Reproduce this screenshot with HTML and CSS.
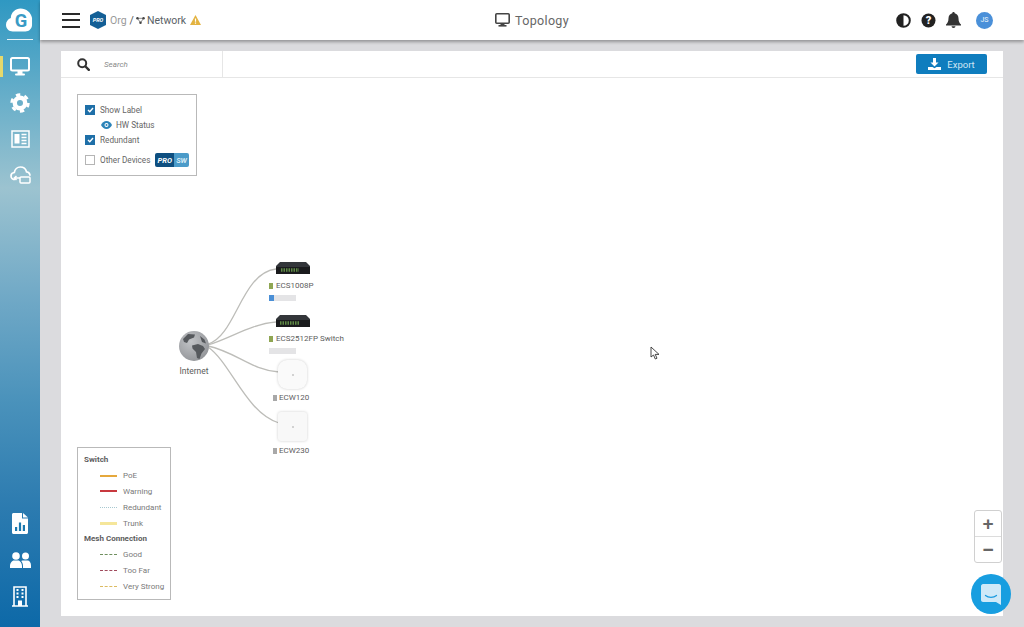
FILE: index.html
```html
<!DOCTYPE html>
<html lang="en">
<head>
<meta charset="utf-8">
<title>Topology</title>
<link rel="stylesheet" href="styles.css">
</head>
<body>
<div class="app">
  <aside class="sidebar">
    <div class="logo">
      <svg width="28" height="26" viewBox="0 0 28 26"><path fill="#fff" d="M7 25C3 25 0 22 0 18c0-3 2-6 5-7C5 5 10 1 15 1c6 0 11 4 12 10v7c0 4-3 7-7 7z"/><text x="15.500" y="20.500" text-anchor="middle" class="logo-g">G</text></svg>
    </div>
    <nav class="nav nav-top">
      <a class="nav-item active"><svg width="20" height="19" viewBox="0 0 20 19"><rect x="1" y="1" width="18" height="12.500" rx="1.500" fill="none" stroke="#fff" stroke-width="2"/><rect x="7.500" y="14" width="5" height="3" fill="#fff"/><rect x="5" y="16.500" width="10" height="2" rx="1" fill="#fff"/></svg></a>
      <a class="nav-item"><svg width="20" height="20" viewBox="0 0 20 20"><circle cx="10" cy="10" r="5.200" fill="none" stroke="#fff" stroke-width="4.400"/><circle cx="10" cy="10" r="8.400" fill="none" stroke="#fff" stroke-width="2.600" stroke-dasharray="4.400 4.400"/></svg></a>
      <a class="nav-item"><svg width="19" height="18" viewBox="0 0 19 18"><rect x="1" y="1" width="17" height="16" fill="none" stroke="#fff" stroke-width="1.500"/><rect x="3.500" y="4" width="5" height="9.500" fill="#fff"/><path d="M10.500 4.500h5M10.500 7.500h5M10.500 10.500h5M10.500 13.500h5" stroke="#fff" stroke-width="1.300"/></svg></a>
      <a class="nav-item"><svg width="21" height="19" viewBox="0 0 21 19"><path fill="none" stroke="#fff" stroke-width="1.700" d="M5 13.500C2.800 13.500 1 12 1 10c0-2 1.500-3.300 3.300-3.500C4.800 3.300 7.300 1 10.300 1c3 0 5.500 2 6.200 4.800 2 .3 3.500 2 3.500 3.900"/><path fill="none" stroke="#fff" stroke-width="1.500" d="M10 12H4.500m2-2l-2.200 2 2.200 2"/><rect x="10" y="11" width="10" height="6" rx="1" fill="none" stroke="#fff" stroke-width="1.500"/></svg></a>
    </nav>
    <nav class="nav nav-bottom">
      <a class="nav-item"><svg width="16" height="21" viewBox="0 0 16 21"><path fill="#fff" d="M0 1.500C0 .7.700 0 1.500 0H10v5.500h6v14c0 .8-.7 1.500-1.500 1.500h-13C.7 21 0 20.300 0 19.500z"/><path fill="#fff" d="M11 0l5 4.500h-5z"/><path fill="#1a78ae" d="M3 14h2.200v4H3zM6.900 9.500h2.200V18H6.900zM10.800 12h2.200v6h-2.200z"/></svg></a>
      <a class="nav-item"><svg width="21" height="16" viewBox="0 0 21 16"><circle cx="6" cy="4" r="3.800" fill="#fff"/><circle cx="15.500" cy="4" r="3.500" fill="#fff"/><path fill="#fff" d="M0 14c0-3 2-5.500 4-5.500h4c2 0 4 2.500 4 5.500v2H0zM13 16v-2c0-2-.7-3.700-1.800-5 .8-.4 1.500-.5 2.300-.5h4c2 0 3.500 2 3.500 5v2.500z"/></svg></a>
      <a class="nav-item"><svg width="16" height="21" viewBox="0 0 16 21"><path fill="none" stroke="#fff" stroke-width="1.600" d="M2 20V1h12v19M0 20h16"/><path stroke="#fff" stroke-width="2" d="M4.500 4h2M9.500 4h2M4.500 7.500h2M9.500 7.500h2M4.500 11h2M9.500 11h2"/><rect x="6" y="14.500" width="4" height="5.500" fill="#fff"/></svg></a>
    </nav>
  </aside>

  <div class="main">
    <header class="topbar">
      <div class="crumbs">
        <button class="burger" aria-label="Menu"><span></span><span></span><span></span></button>
        <svg class="pro-hex" width="16" height="18" viewBox="0 0 16 18"><path fill="#135f96" d="M8 0l8 4v10l-8 4-8-4V4z"/><text x="8" y="11" text-anchor="middle" class="hex-text">PRO</text></svg>
        <span class="crumb-org">Org</span>
        <span class="crumb-sep">/</span>
        <svg class="net-icon" width="9" height="7" viewBox="0 0 10 8"><circle cx="1.500" cy="1.500" r="1.400"/><circle cx="8.500" cy="1.500" r="1.400"/><circle cx="5" cy="6.500" r="1.400"/><path d="M1.500 1.500h7L5 6.500z" fill="none" stroke="#444" stroke-width=".7"/></svg>
        <span class="crumb-net">Network</span>
        <svg class="warn" width="11" height="10" viewBox="0 0 11 10"><path fill="#e3b341" d="M5.500 0L11 10H0z"/><path stroke="#fff" stroke-width="1.200" d="M5.500 3.500v3.200M5.500 7.600v1.200"/></svg>
      </div>
      <div class="title">
        <svg width="15" height="14" viewBox="0 0 15 14"><rect x=".8" y=".8" width="13.400" height="9.400" rx="1" fill="none" stroke="#444" stroke-width="1.600"/><rect x="5.500" y="10" width="4" height="2.500" fill="#444"/><rect x="3.500" y="12" width="8" height="1.600" fill="#444"/></svg>
        <span>Topology</span>
      </div>
      <div class="top-actions">
        <svg width="15" height="15" viewBox="0 0 15 15"><circle cx="7.500" cy="7.500" r="6.300" fill="#fff" stroke="#222" stroke-width="2"/><path fill="#222" d="M7.500 1.500a6 6 0 000 12z"/></svg>
        <svg width="15" height="15" viewBox="0 0 15 15"><circle cx="7.500" cy="7.500" r="7" fill="#222"/><text x="7.500" y="11.300" text-anchor="middle" class="q-text">?</text></svg>
        <svg width="15" height="16" viewBox="0 0 15 16"><path fill="#333" d="M7.500 0c.7 0 1.200.5 1.200 1.200C11 1.800 12.500 3.800 12.500 6.200c0 3.300 1 4.800 2.500 6.300v1H0v-1c1.500-1.500 2.500-3 2.500-6.300 0-2.400 1.500-4.400 3.800-5C6.300.5 6.800 0 7.500 0zM5.500 14.300h4a2 1.700 0 01-4 0z"/></svg>
        <span class="avatar">JS</span>
      </div>
    </header>

    <main class="content">
      <section class="card">
        <div class="toolbar">
          <div class="search">
            <svg width="13" height="13" viewBox="0 0 13 13"><circle cx="5.200" cy="5.200" r="4" fill="none" stroke="#333" stroke-width="2"/><path stroke="#333" stroke-width="2.400" stroke-linecap="round" d="M8.500 8.500l3.300 3.300"/></svg>
            <span class="search-text">Search</span>
          </div>
          <button class="export">
            <svg width="13" height="12" viewBox="0 0 13 12"><path fill="#fff" d="M5 0h3v4.500h2.500L6.500 8.500l-4-4H5zM0 9h4.500l2 1.300L8.500 9H13v3H0z"/></svg>
            <span>Export</span>
          </button>
        </div>

        <div class="canvas">
          <svg class="links" width="942" height="538" viewBox="0 0 942 538">
            <g fill="none" stroke="#bdbdb9" stroke-width="1.300">
              <path d="M147 266C175 258 180 195 215 191"/>
              <path d="M147 267C170 260 190 246 215 244"/>
              <path d="M147 268C175 274 190 292 218 294"/>
              <path d="M147 269C170 285 185 335 218 345"/>
            </g>
          </svg>

          <div class="panel options">
            <label class="opt"><span class="box on"><svg width="7" height="6" viewBox="0 0 7 6"><path d="M1 3l1.800 1.800L6 1" fill="none" stroke="#fff" stroke-width="1.400"/></svg></span>Show Label</label>
            <div class="opt opt-sub"><svg width="11" height="8" viewBox="0 0 11 8"><path fill="#2b83b8" d="M5.500 0C8 0 10 2 11 4 10 6 8 8 5.500 8S1 6 0 4C1 2 3 0 5.500 0z"/><circle cx="5.500" cy="4" r="2" fill="#fff"/><circle cx="5.500" cy="4" r="1" fill="#2b83b8"/></svg>HW Status</div>
            <label class="opt"><span class="box on"><svg width="7" height="6" viewBox="0 0 7 6"><path d="M1 3l1.800 1.800L6 1" fill="none" stroke="#fff" stroke-width="1.400"/></svg></span>Redundant</label>
            <label class="opt opt-last"><span class="box"></span>Other Devices<span class="badge"><b class="badge-pro">PRO</b><b class="badge-sw">SW</b></span></label>
          </div>

          <div class="node globe-node">
            <svg width="30" height="30" viewBox="0 0 30 30">
              <defs><radialGradient id="globe-shade" cx=".4" cy=".35" r=".75"><stop offset="0" stop-color="#c2c4c7"/><stop offset="1" stop-color="#8f9195"/></radialGradient></defs>
              <circle cx="15" cy="15" r="15" fill="url(#globe-shade)"/>
              <path fill="#56595d" d="M9 3l7 .5-1 3-5 2-2 3.500-3-1-1-3zM13 14.500l6-1.500 5 2 2 3-3.500 4.500-2 5.500-2.500-1-1-6-3.500-3.500zM21 5l4.500 3.500 1.500 4-4-1.500z"/>
            </svg>
            <span class="node-name">Internet</span>
          </div>

          <div class="node dev sw sw-a">
            <svg class="switch-ic" width="34" height="12" viewBox="0 0 34 12"><path fill="#33363a" d="M4 0h26l4 4v8H0V4z"/><path fill="#1a1b1d" d="M0 5h34v7H0z"/><path stroke="#5f8a45" stroke-width="3.500" stroke-dasharray="1.500 1" d="M5 8h18"/></svg>
            <span class="dev-label"><i class="dot green"></i>ECS1008P</span>
            <span class="usage"><i class="usage-fill"></i></span>
          </div>
          <div class="node dev sw sw-b">
            <svg class="switch-ic" width="34" height="12" viewBox="0 0 34 12"><path fill="#33363a" d="M4 0h26l4 4v8H0V4z"/><path fill="#1a1b1d" d="M0 5h34v7H0z"/><path stroke="#5f8a45" stroke-width="3.500" stroke-dasharray="1.500 1" d="M4 8h20"/></svg>
            <span class="dev-label"><i class="dot green"></i>ECS2512FP Switch</span>
            <span class="usage"></span>
          </div>
          <div class="node dev ap ap-a">
            <span class="ap-ic round"><i></i></span>
            <span class="dev-label"><i class="dot grey"></i>ECW120</span>
          </div>
          <div class="node dev ap ap-b">
            <span class="ap-ic"><i></i></span>
            <span class="dev-label"><i class="dot grey"></i>ECW230</span>
          </div>

          <div class="panel legend">
            <div class="leg-head">Switch</div>
            <div class="leg-row"><i class="line poe"></i>PoE</div>
            <div class="leg-row"><i class="line warning"></i>Warning</div>
            <div class="leg-row"><i class="line redundant"></i>Redundant</div>
            <div class="leg-row"><i class="line trunk"></i>Trunk</div>
            <div class="leg-head">Mesh Connection</div>
            <div class="leg-row"><i class="line good"></i>Good</div>
            <div class="leg-row"><i class="line far"></i>Too Far</div>
            <div class="leg-row"><i class="line strong"></i>Very Strong</div>
          </div>

          <svg class="cursor" width="10" height="14" viewBox="0 0 10 14"><path fill="#fff" stroke="#333" stroke-width=".9" d="M1 1v10l2.500-2 1.800 4 1.700-.8-1.800-3.800H9z"/></svg>

          <div class="zoom">
            <button class="zoom-btn">+</button>
            <button class="zoom-btn">&#8722;</button>
          </div>
        </div>
      </section>
    </main>
  </div>
</div>
<div class="chat">
  <svg width="20" height="21" viewBox="0 0 20 21"><path fill="#cfe9f8" d="M2 0h16c1 0 2 1 2 2v19l-5-3H2c-1 0-2-1-2-2V2C0 1 1 0 2 0z"/><path d="M4.500 11.500c3 2.500 8 2.500 11 0" fill="none" stroke="#1b9be0" stroke-width="1.300" stroke-linecap="round"/></svg>
</div>
</body>
</html>
```
FILE: styles.css
```css
* { box-sizing: border-box; }
html, body { margin: 0; height: 100%; overflow: hidden; }
body { font-family: Roboto, "Liberation Sans", sans-serif; color: #666; background: #dbdbde; }

.app { display: flex; height: 627px; }

.sidebar {
  width: 40px; flex: none; display: flex; flex-direction: column;
  background: linear-gradient(180deg, #2f98c2 0%, #9cc3d0 30%, #6fa8c6 48%, #4a92bb 64%, #2c7bb0 81%, #0d69a8 100%);
}
.logo { height: 40px; margin: 0 7px; padding-top: 7px; border-bottom: 1px solid #e8f3f8; display: flex; justify-content: center; }
.logo svg { margin-left: -1px; }
.logo-g { font: 700 19px Roboto, sans-serif; fill: #3a9bc5; }
.nav { display: flex; flex-direction: column; }
.nav-top { margin-top: 8px; }
.nav-bottom { margin-top: auto; margin-bottom: 12px; }
.nav-item { height: 36.500px; display: flex; align-items: center; justify-content: center; position: relative; }
.nav-item.active::before { content: ""; position: absolute; left: 0; top: 8px; width: 3px; height: 21px; background: #e6d96c; }

.main { flex: 1; min-width: 0; display: flex; flex-direction: column; }

.topbar {
  height: 40px; flex: none; background: #fff; display: grid; grid-template-columns: 1fr auto 1fr;
  align-items: center; padding: 0 22px; box-shadow: 0 2px 3px rgba(0,0,0,.32); position: relative; z-index: 2;
}
.crumbs { display: flex; align-items: center; font-size: 10.500px; }
.burger { width: 18px; height: 15px; padding: 0; border: 0; background: none; display: flex; flex-direction: column; justify-content: space-between; margin-right: 10px; }
.burger span { display: block; height: 2px; background: #2a2a2a; }
.pro-hex { margin-right: 4px; }
.hex-text { font: italic 700 5.500px Roboto, sans-serif; fill: #fff; }
.crumb-org { color: #999; }
.crumb-sep { color: #555; margin: 0 2px 0 3px; }
.net-icon { fill: #444; margin-right: 2px; }
.crumb-net { color: #5a5f66; margin-right: 4px; }
.title { display: flex; align-items: center; gap: 5px; font-size: 12.500px; color: #666; letter-spacing: .35px; }
.top-actions { display: flex; align-items: center; justify-content: flex-end; gap: 10px; padding-right: 9px; }
.q-text { font: 900 11px Roboto, sans-serif; fill: #fff; }
.avatar { width: 17px; height: 17px; margin-left: 5px; border-radius: 50%; background: #4a90d9; color: #dce9f7; font-size: 7px; font-weight: 500; display: flex; align-items: center; justify-content: center; }

.content { flex: 1; padding: 11px 21px; min-height: 0; display: flex; }
.card { flex: 1; background: #fff; display: flex; flex-direction: column; }

.toolbar { height: 27px; flex: none; display: flex; align-items: center; justify-content: space-between; border-bottom: 1px solid #e6e6e6; padding-right: 16px; }
.search { width: 162px; height: 26px; display: flex; align-items: center; padding-left: 16px; gap: 14px; border-right: 1px solid #e6e6e6; }
.search-text { font-size: 8px; font-style: italic; color: #8a8a8a; }
.export { width: 71px; height: 20px; border: 0; border-radius: 2px; background: #0f7dbe; color: #cfe6f4; font: 9.500px Roboto, sans-serif; display: flex; align-items: center; justify-content: center; gap: 6px; }

.canvas { flex: 1; position: relative; }
.links { position: absolute; left: 0; top: 0; }

.panel { position: absolute; background: #fff; border: 1px solid #b9b9b9; font-size: 8.200px; color: #666; white-space: nowrap; }
.options { left: 16px; top: 16px; width: 120px; height: 82px; padding: 7px 7px 0; }
.opt { height: 15px; display: flex; align-items: center; gap: 5px; }
.opt-sub { padding-left: 16px; gap: 4px; }
.opt-last { height: 18px; margin-top: 4px; }
.box { width: 10px; height: 10px; flex: none; border: 1px solid #b5b5b5; display: flex; align-items: center; justify-content: center; }
.box.on { background: #1e6fa8; border-color: #1e6fa8; }
.badge { display: flex; height: 14px; margin-left: 0; font-size: 7.500px; font-style: italic; color: #fff; border-radius: 2px; overflow: hidden; }
.badge b { display: flex; align-items: center; justify-content: center; }
.badge-pro { width: 20px; background: #0e4f80; }
.badge-sw { width: 16px; background: #4b9bc9; color: #d5ebf6; }

.legend { left: 16px; bottom: 16px; width: 94px; height: 153px; padding: 4px 6px 0; font-size: 8px; }
.leg-head { height: 15.800px; display: flex; align-items: center; font-weight: 700; color: #5d5d5d; }
.leg-row { height: 15.800px; display: flex; align-items: center; padding-left: 16px; color: #7a7a7a; }
.line { width: 17px; margin-right: 6px; border-top: 2px solid; flex: none; }
.poe { border-color: #e5a83c; }
.warning { border-color: #c8393f; }
.redundant { border-top: 1px dotted #a8c8d0; }
.trunk { border-top: 3px solid #f5e69a; }
.good { border-top: 1px dashed #6f8f5f; }
.far { border-top: 1px dashed #a04a5c; }
.strong { border-top: 1px dashed #dcbb62; }

.node { position: absolute; font-size: 8px; color: #5d5d5d; }
.globe-node { left: 118px; top: 253px; width: 30px; height: 46px; display: flex; flex-direction: column; align-items: center; gap: 5px; }
.node-name { white-space: nowrap; line-height: 11px; font-size: 8.500px; }
.dev { display: flex; flex-direction: column; }
.switch-ic { margin-left: 7px; }
.sw-a { left: 208px; top: 184px; }
.sw-b { left: 208px; top: 237px; }
.ap-a { left: 212px; top: 282px; }
.ap-b { left: 212px; top: 334px; }
.dev-label { display: flex; align-items: center; gap: 3px; white-space: nowrap; line-height: 11px; margin-top: 6px; }
.ap .dev-label { margin-top: 4px; gap: 2px; }
.ap-a .dev-label { margin-top: 3px; }
.dot { width: 4px; height: 6px; flex: none; }
.green { background: #8fa653; }
.grey { background: #a8a8a8; }
.usage { width: 27px; height: 6px; background: #e4e4e6; margin-top: 4px; display: block; }
.usage-fill { display: block; width: 5px; height: 6px; background: #4a8fd6; }
.ap-ic { width: 29px; height: 29px; margin-left: 5px; border-radius: 3px; background: #f8f8f8; box-shadow: 0 0 3px rgba(0,0,0,.2); display: flex; align-items: center; justify-content: center; }
.ap-ic.round { border-radius: 9px; background: #fafafa; }
.ap-ic i { width: 2px; height: 2px; border-radius: 50%; background: #c4c4c4; }

.cursor { position: absolute; left: 589px; top: 268px; }

.zoom { position: absolute; right: 1px; bottom: 53px; width: 28px; height: 53px; border: 1px solid #d0d0d0; border-radius: 3px; background: #fff; display: flex; flex-direction: column; }
.zoom-btn { flex: 1; border: 0; background: none; padding: 0; font: 700 19px/1 "Liberation Sans", sans-serif; color: #666; }
.zoom-btn + .zoom-btn { border-top: 1px solid #dcdcdc; }

.chat { position: fixed; left: 971px; top: 574px; width: 40px; height: 40px; border-radius: 50%; background: #189ee0; display: flex; align-items: center; justify-content: center; }
```
